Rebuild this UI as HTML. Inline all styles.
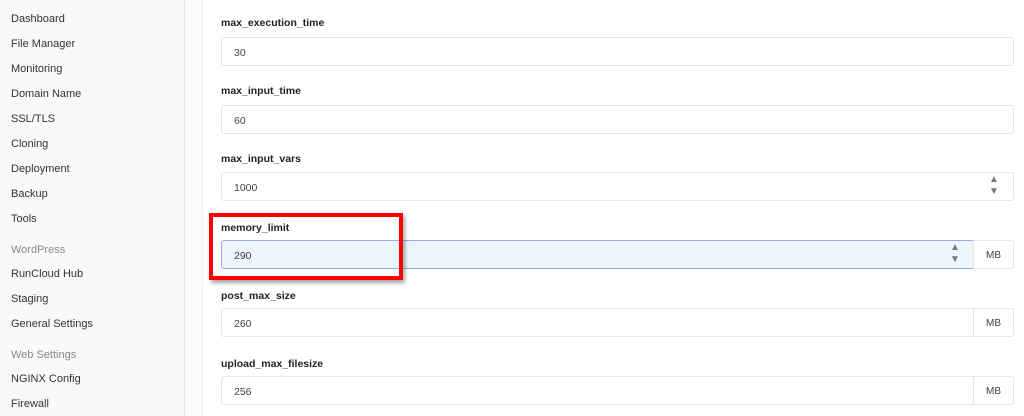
<!DOCTYPE html>
<html><head><style>
body{margin:0;width:1024px;height:416px;overflow:hidden;font-family:"Liberation Sans",sans-serif;background:#fff;position:relative}
.sb{position:absolute;left:0;top:0;width:184px;height:416px;background:#f8f9fa;border-right:1px solid #e6e8eb}
.gap{position:absolute;left:185px;top:0;width:17px;height:416px;background:#fbfbfc;border-right:1px solid #eef0f2}
.it{position:absolute;left:11px;font-size:11px;color:#333}
.hd{color:#888}
.lb{position:absolute;left:221px;font-size:10.5px;font-weight:bold;color:#222}
.in{position:absolute;left:221px;border:1px solid #e3e5e8;border-radius:3px;box-sizing:border-box;height:29px;font-size:10.5px;color:#444;padding:9px 0 0 12px;background:#fff}
.mb{position:absolute;left:973px;width:41px;height:29px;border:1px solid #e3e5e8;border-radius:0 3px 3px 0;box-sizing:border-box;font-size:10px;color:#444;text-align:center;padding-top:9px}
.sp{position:absolute;font-size:10px;color:#777;line-height:12px}
</style></head><body>
<div class="sb">
<div class="it" style="top:13px">Dashboard</div>
<div class="it" style="top:38px">File Manager</div>
<div class="it" style="top:63px">Monitoring</div>
<div class="it" style="top:88px">Domain Name</div>
<div class="it" style="top:113px">SSL/TLS</div>
<div class="it" style="top:138px">Cloning</div>
<div class="it" style="top:163px">Deployment</div>
<div class="it" style="top:188px">Backup</div>
<div class="it" style="top:213px">Tools</div>
<div class="it hd" style="top:244px">WordPress</div>
<div class="it" style="top:268px">RunCloud Hub</div>
<div class="it" style="top:293px">Staging</div>
<div class="it" style="top:318px">General Settings</div>
<div class="it hd" style="top:349px">Web Settings</div>
<div class="it" style="top:373px">NGINX Config</div>
<div class="it" style="top:398px">Firewall</div>
</div>
<div class="gap"></div>
<div class="lb" style="top:17px">max_execution_time</div>
<div class="in" style="top:37px;width:793px">30</div>
<div class="lb" style="top:85px">max_input_time</div>
<div class="in" style="top:105px;width:793px">60</div>
<div class="lb" style="top:153px">max_input_vars</div>
<div class="in" style="top:172px;width:793px">1000</div>
<div class="sp" style="left:989px;top:174px">▲<br>▼</div>
<div class="lb" style="top:222px">memory_limit</div>
<div class="in" style="top:240px;width:753px;background:#eef4fd;border-color:#8fb0e8;border-radius:3px 0 0 3px">290</div>
<div class="sp" style="left:950px;top:242px">▲<br>▼</div>
<div class="mb" style="top:240px">MB</div>
<div class="lb" style="top:290px">post_max_size</div>
<div class="in" style="top:308px;width:753px;border-radius:3px 0 0 3px">260</div>
<div class="mb" style="top:308px">MB</div>
<div class="lb" style="top:358px">upload_max_filesize</div>
<div class="in" style="top:376px;width:753px;border-radius:3px 0 0 3px">256</div>
<div class="mb" style="top:376px">MB</div>
<div style="position:absolute;left:209px;top:213px;width:194px;height:67px;border:4px solid #f00;box-sizing:border-box;box-shadow:2px 3px 4px rgba(0,0,0,.35)"></div>
</body></html>
